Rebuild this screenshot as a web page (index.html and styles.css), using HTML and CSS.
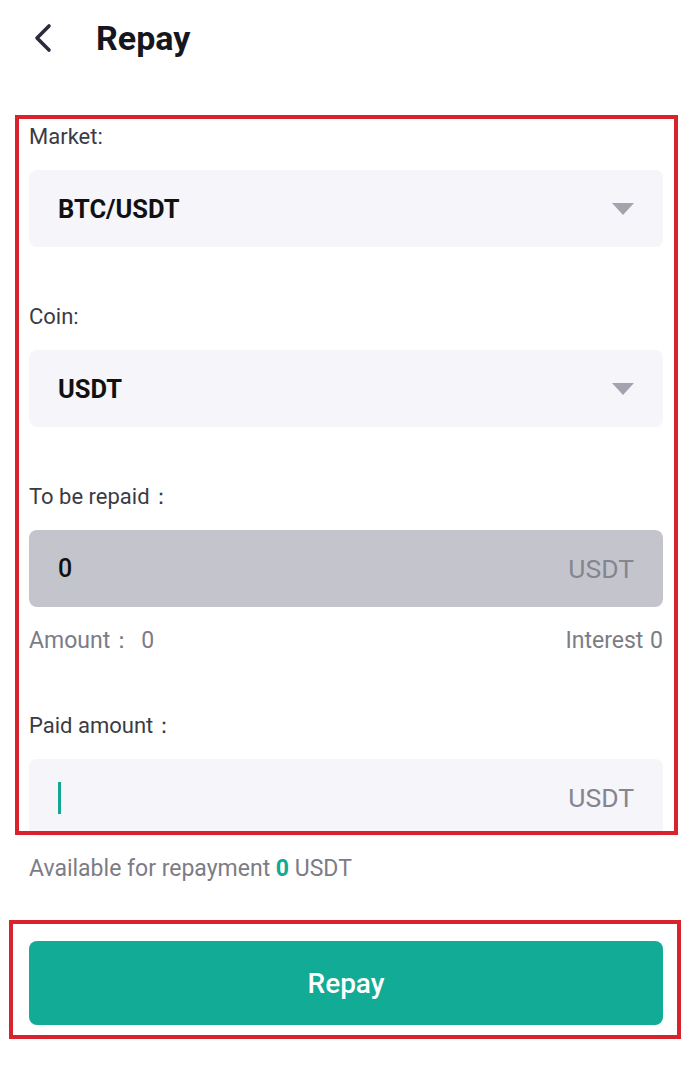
FILE: index.html
```html
<!DOCTYPE html>
<html>
<head>
<meta charset="utf-8">
<link rel="stylesheet" href="styles.css">
</head>
<body>
<div class="page">
  <header class="header">
    <svg class="back" width="24" height="32" viewBox="0 0 24 32"><path d="M17 4 L5 16 L17 28" fill="none" stroke="#2b2b3d" stroke-width="3.6" stroke-linecap="round" stroke-linejoin="round"/></svg>
    <h1 class="title">Repay</h1>
  </header>

  <main class="form">
    <div class="label first">Market:</div>
    <div class="box select">
      <span class="value">BTC/USDT</span>
      <span class="caret"></span>
    </div>

    <div class="label">Coin:</div>
    <div class="box select">
      <span class="value">USDT</span>
      <span class="caret"></span>
    </div>

    <div class="label">To be repaid：</div>
    <div class="box disabled">
      <span class="num">0</span>
      <span class="unit">USDT</span>
    </div>
    <div class="meta">
      <span>Amount：<span class="metanum">0</span></span>
      <span>Interest <span class="metanum0">0</span></span>
    </div>

    <div class="label">Paid amount：</div>
    <div class="box input">
      <span class="cursor"></span>
      <span class="unit">USDT</span>
    </div>

    <div class="avail">Available for repayment <span class="teal">0</span> USDT</div>

    <button class="btn">Repay</button>
  </main>

  <div class="mark mark-form"></div>
  <div class="mark mark-btn"></div>
</div>
</body>
</html>
```

FILE: styles.css
```css
* { box-sizing: border-box; }
html, body { margin: 0; padding: 0; background: #fff; }
body { font-family: Roboto, "Noto Sans", sans-serif; color: #1a1a22; }
.page { position: relative; width: 692px; height: 1080px; overflow: hidden; }

.header { height: 76px; display: flex; align-items: center; padding-left: 32px; }
.back { display: block; }
.title { margin: 0 0 0 40px; font-size: 34px; font-weight: 700; color: #16161e; letter-spacing: 0; }

.form { padding: 46px 29px 0 29px; display: flex; flex-direction: column; }
.label { font-size: 22px; line-height: 30px; color: #3b3b45; margin-top: 55px; }
.label.first { margin-top: 0; }

.box { height: 77px; border-radius: 8px; background: #f5f5fa; margin-top: 18px; display: flex; align-items: center; justify-content: space-between; padding: 0 29px 0 29px; }
.value { font-size: 25.5px; font-weight: 700; color: #111; }
.caret { width: 0; height: 0; border-left: 11px solid transparent; border-right: 11px solid transparent; border-top: 12px solid #a3a3ad; }
.disabled { background: #c4c5cc; }
.num { font-size: 25px; color: #111; font-weight: 500; }
.unit { font-size: 26.5px; color: #85858f; }
.cursor { width: 3px; height: 32px; background: #12a892; }

.meta { display: flex; justify-content: space-between; font-size: 23px; line-height: 30px; color: #7c7c86; margin-top: 19px; }
.metanum { margin-left: 8px; }
.metanum0 { margin-left: 1px; }

.avail { font-size: 23px; line-height: 30px; color: #7c7c86; margin-top: 18px; }
.teal { color: #12a892; font-weight: 700; }

.btn { margin-top: 57px; height: 84px; border: 0; border-radius: 8px; background: #12ab95; color: #fff; font-family: Roboto, sans-serif; font-size: 28px; font-weight: 500; }

.mark { position: absolute; border: 4px solid #d8222c; pointer-events: none; }
.mark-form { left: 15px; top: 115px; width: 663px; height: 720px; }
.mark-btn { left: 9px; top: 920px; width: 672px; height: 119px; }
```
